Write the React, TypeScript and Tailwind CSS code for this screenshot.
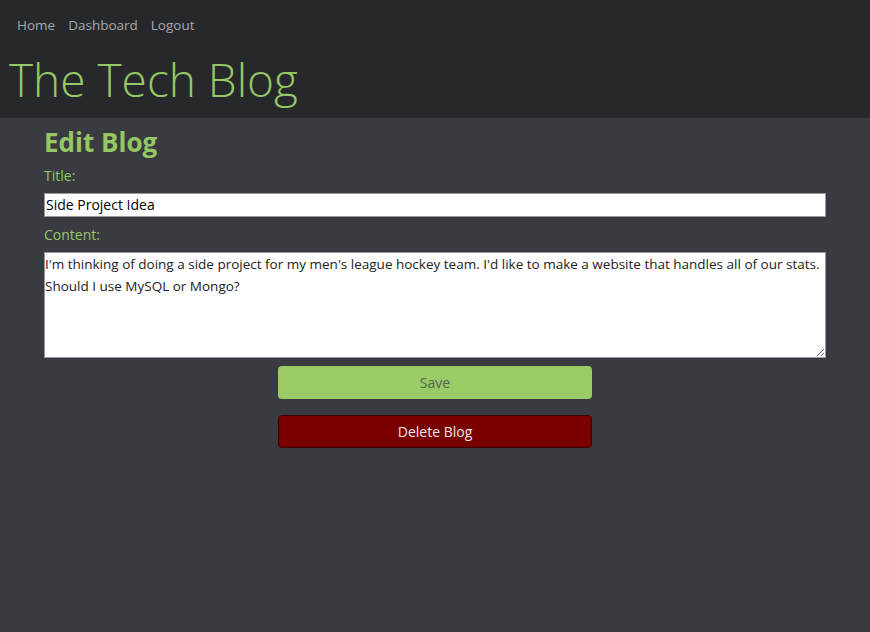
const font = "font-['Segoe_UI','Open_Sans','Noto_Sans',sans-serif]";

export default function App() {
  return (
    <div className={`min-h-[632px] bg-[#3a3b40] ${font}`}>
      <header className="bg-[#27282c] h-[118px]">
        <nav className="flex gap-[13px] pl-[17px] pt-[15px] text-[13.5px] text-[#a8a8ab]">
          <a href="#">Home</a>
          <a href="#">Dashboard</a>
          <a href="#">Logout</a>
        </nav>
        <h1 className="pl-[9px] mt-[17px] text-[46px] leading-[1.2] font-light text-[#95c765]">
          The Tech Blog
        </h1>
      </header>

      <main className="px-[44px] pt-[8px]">
        <h2 className="text-[26px] font-bold text-[#95c765] leading-[1.3]">Edit Blog</h2>
        <form className="flex flex-col">
          <label className="mt-[5px] text-[14px] text-[#95c765]">Title:</label>
          <input
            defaultValue="Side Project Idea"
            className="mt-[7px] h-[24px] bg-white border border-[#999] px-[1px] text-[14px] text-black"
          />
          <label className="mt-[7px] text-[14px] text-[#95c765]">Content:</label>
          <textarea
            defaultValue="I'm thinking of doing a side project for my men's league hockey team. I'd like to make a website that handles all of our stats. Should I use MySQL or Mongo?"
            className="mt-[7px] h-[106px] bg-white border border-[#999] px-[0px] pt-[0px] text-[13.5px] leading-[22px] text-[#222] resize-y"
          />
          <div className="flex flex-col items-center gap-[16px] mt-[8px]">
            <button
              type="button"
              className="w-[314px] h-[33px] rounded-[4px] bg-[#99cc66] text-[14px] text-[#55644a]"
            >
              Save
            </button>
            <button
              type="button"
              className="w-[314px] h-[33px] rounded-[4px] bg-[#7a0000] border border-[#3a0000] text-[14px] text-[#f2e6e6]"
            >
              Delete Blog
            </button>
          </div>
        </form>
      </main>
    </div>
  );
}
